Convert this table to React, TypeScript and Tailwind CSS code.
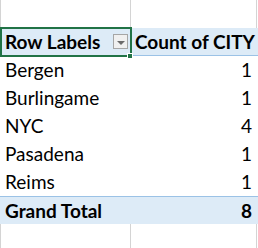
import React from 'react';

interface Row {
  label: string;
  count: number;
}

const rows: Row[] = [
  { label: 'Bergen', count: 1 },
  { label: 'Burlingame', count: 1 },
  { label: 'NYC', count: 4 },
  { label: 'Pasadena', count: 1 },
  { label: 'Reims', count: 1 },
];

const font = { fontFamily: 'Lato, "Liberation Sans", sans-serif' };

const App: React.FC = () => {
  return (
    <div className="w-[258px] h-[248px] bg-white overflow-hidden text-[19px] text-black" style={font}>
      {/* empty row above the pivot */}
      <div className="flex h-[28px] border-l border-[#d4d4d4]">
        <div className="w-[130px] border-r border-[#d4d4d4]" />
        <div className="w-[126px] border-r border-[#d4d4d4]" />
      </div>

      {/* header */}
      <div className="relative flex h-[28px] bg-[#ddebf7] border-b border-[#9bc2e6] font-bold leading-[27px]">
        <div className="w-[131px] pl-[5px] flex items-center">
          <span>Row Labels</span>
        </div>
        <div className="w-[126px] pl-[4px]">Count of CITY</div>
        {/* selected cell outline */}
        <div className="absolute left-0 top-[-1px] w-[132px] h-[30px] border-2 border-[#217346]" />
        <div className="absolute left-[127px] top-[25px] w-[6px] h-[6px] bg-[#217346] border border-white" />
        {/* filter button */}
        <div className="absolute left-[113px] top-[6px] w-[15px] h-[15px] bg-[#f0f0f0] border border-[#a6a6a6] flex items-center justify-center">
          <div className="w-0 h-0 border-l-[4px] border-r-[4px] border-t-[4px] border-l-transparent border-r-transparent border-t-[#6b6b6b] mt-[2px]" />
        </div>
      </div>

      {rows.map((r) => (
        <div key={r.label} className="flex h-[28px] leading-[28px]">
          <div className="w-[131px] pl-[5px]">{r.label}</div>
          <div className="w-[126px] pr-[5px] text-right">{r.count}</div>
        </div>
      ))}

      {/* grand total */}
      <div className="flex h-[28px] bg-[#ddebf7] border-t border-[#9bc2e6] font-bold leading-[27px]">
        <div className="w-[131px] pl-[5px]">Grand Total</div>
        <div className="w-[126px] pr-[5px] text-right">8</div>
      </div>

      {/* empty row below */}
      <div className="flex h-[28px] border-l border-[#d4d4d4]">
        <div className="w-[130px] border-r border-[#d4d4d4]" />
        <div className="w-[126px] border-r border-[#d4d4d4]" />
      </div>
    </div>
  );
};

export default App;
